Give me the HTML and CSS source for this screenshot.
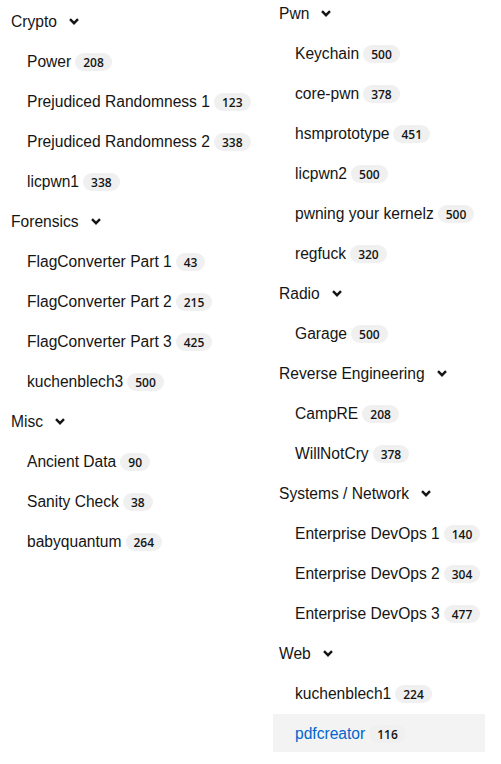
FILE: index.html
```html
<!DOCTYPE html>
<html lang="en">
<head>
<meta charset="utf-8">
<link rel="stylesheet" href="styles.css">
</head>
<body>
<nav class="nav">
  <div class="col col-first">
    <div class="group"><span>Crypto</span><svg class="chev" viewBox="0 0 10 7"><path d="M1 1.2 L5 5.2 L9 1.2" /></svg></div>
    <a class="item"><span>Power</span><span class="badge">208</span></a>
    <a class="item"><span>Prejudiced Randomness 1</span><span class="badge">123</span></a>
    <a class="item"><span>Prejudiced Randomness 2</span><span class="badge">338</span></a>
    <a class="item"><span>licpwn1</span><span class="badge">338</span></a>
    <div class="group"><span>Forensics</span><svg class="chev" viewBox="0 0 10 7"><path d="M1 1.2 L5 5.2 L9 1.2" /></svg></div>
    <a class="item"><span>FlagConverter Part 1</span><span class="badge">43</span></a>
    <a class="item"><span>FlagConverter Part 2</span><span class="badge">215</span></a>
    <a class="item"><span>FlagConverter Part 3</span><span class="badge">425</span></a>
    <a class="item"><span>kuchenblech3</span><span class="badge">500</span></a>
    <div class="group"><span>Misc</span><svg class="chev" viewBox="0 0 10 7"><path d="M1 1.2 L5 5.2 L9 1.2" /></svg></div>
    <a class="item"><span>Ancient Data</span><span class="badge">90</span></a>
    <a class="item"><span>Sanity Check</span><span class="badge">38</span></a>
    <a class="item"><span>babyquantum</span><span class="badge">264</span></a>
  </div>
  <div class="col col-second">
    <div class="group"><span>Pwn</span><svg class="chev" viewBox="0 0 10 7"><path d="M1 1.2 L5 5.2 L9 1.2" /></svg></div>
    <a class="item"><span>Keychain</span><span class="badge">500</span></a>
    <a class="item"><span>core-pwn</span><span class="badge">378</span></a>
    <a class="item"><span>hsmprototype</span><span class="badge">451</span></a>
    <a class="item"><span>licpwn2</span><span class="badge">500</span></a>
    <a class="item"><span>pwning your kernelz</span><span class="badge">500</span></a>
    <a class="item"><span>regfuck</span><span class="badge">320</span></a>
    <div class="group"><span>Radio</span><svg class="chev" viewBox="0 0 10 7"><path d="M1 1.2 L5 5.2 L9 1.2" /></svg></div>
    <a class="item"><span>Garage</span><span class="badge">500</span></a>
    <div class="group"><span>Reverse Engineering</span><svg class="chev" viewBox="0 0 10 7"><path d="M1 1.2 L5 5.2 L9 1.2" /></svg></div>
    <a class="item"><span>CampRE</span><span class="badge">208</span></a>
    <a class="item"><span>WillNotCry</span><span class="badge">378</span></a>
    <div class="group"><span>Systems / Network</span><svg class="chev" viewBox="0 0 10 7"><path d="M1 1.2 L5 5.2 L9 1.2" /></svg></div>
    <a class="item"><span>Enterprise DevOps 1</span><span class="badge">140</span></a>
    <a class="item"><span>Enterprise DevOps 2</span><span class="badge">304</span></a>
    <a class="item"><span>Enterprise DevOps 3</span><span class="badge">477</span></a>
    <div class="group"><span>Web</span><svg class="chev" viewBox="0 0 10 7"><path d="M1 1.2 L5 5.2 L9 1.2" /></svg></div>
    <a class="item"><span>kuchenblech1</span><span class="badge">224</span></a>
    <a class="item item-current"><span>pdfcreator</span><span class="badge">116</span></a>
  </div>
</nav>
</body>
</html>
```

FILE: styles.css
```css
html, body {
  margin: 0;
  padding: 0;
  background: #ffffff;
}

body {
  font-family: "Liberation Sans", Arial, sans-serif;
  font-size: 15.6px;
  color: #151515;
  overflow: hidden;
}

.nav {
  display: flex;
  margin-top: -7px;
  padding-left: 5px;
}

.col {
  display: flex;
  flex-direction: column;
}

.col-first {
  flex: 0 0 268px;
  padding-top: 8px;
}

.col-second {
  flex: 1 1 auto;
  min-width: 0;
}

.group {
  box-sizing: border-box;
  height: 40px;
  display: flex;
  align-items: center;
  padding-left: 6px;
  padding-top: 2px;
  gap: 12px;
  white-space: nowrap;
}

.chev {
  width: 10px;
  height: 7px;
  margin-top: -1px;
  fill: none;
  stroke: #151515;
  stroke-width: 2.4;
  stroke-linecap: butt;
  stroke-linejoin: miter;
}

.item {
  box-sizing: border-box;
  width: 212px;
  height: 38px;
  margin: 1px 0;
  padding-left: 22px;
  padding-top: 2px;
  display: flex;
  align-items: center;
  gap: 4px;
  white-space: nowrap;
  color: #151515;
  text-decoration: none;
}

.item-current {
  background: #f3f3f3;
  color: #0066cc;
}

.badge {
  display: inline-flex;
  align-items: center;
  justify-content: center;
  height: 18px;
  padding: 0 8px;
  border-radius: 30em;
  background: #f0f0f0;
  color: #151515;
  font-family: "Open Sans", "Liberation Sans", sans-serif;
  font-size: 12px;
  font-weight: 600;
}
```
